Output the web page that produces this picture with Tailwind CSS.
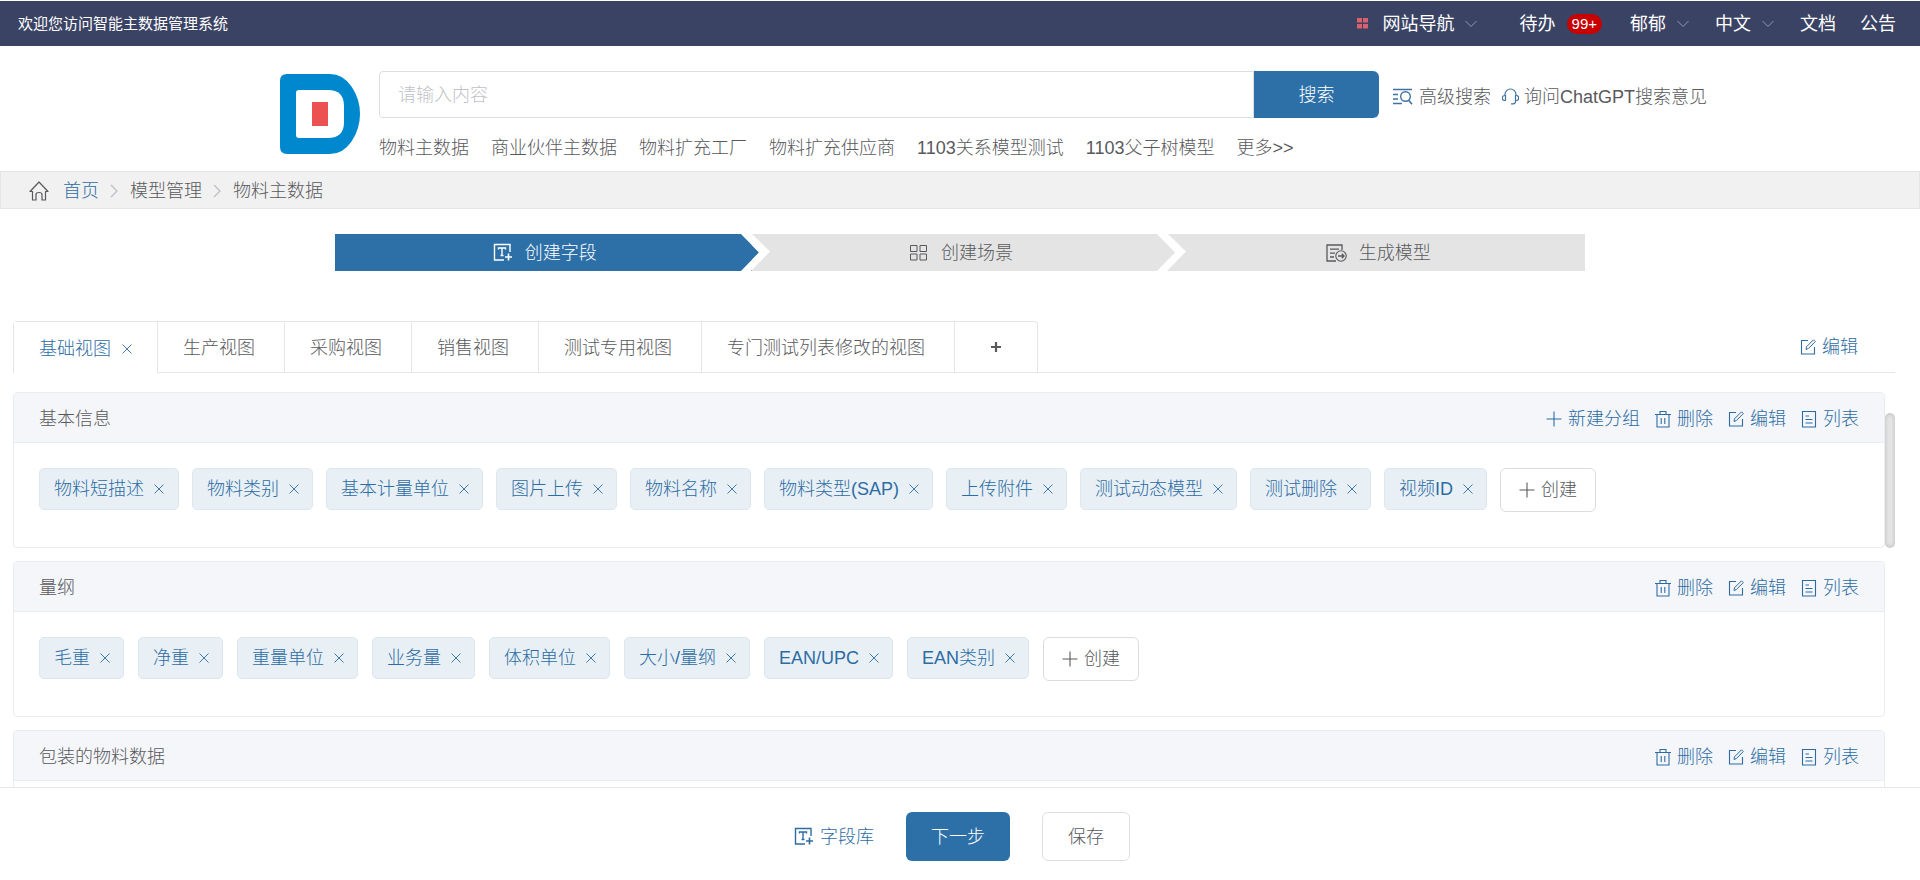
<!DOCTYPE html>
<html lang="zh-CN">
<head>
<meta charset="utf-8">
<meta name="viewport" content="width=device-width, initial-scale=1">
<title>智能主数据管理系统</title>
<script src="https://cdn.jsdelivr.net/npm/@tailwindcss/browser@4"></script>
</head>
<body class="flex h-screen flex-col overflow-hidden bg-white font-['Liberation_Sans','Noto_Sans_CJK_SC',sans-serif] text-lg/6 font-light text-[#58595c]">

<svg class="hidden" aria-hidden="true">
  <symbol id="i-down" viewBox="0 0 12 12"><path d="M.5 3 6 8.500 11.500 3" fill="none" stroke="currentColor"/></symbol>
  <symbol id="i-right" viewBox="0 0 8 14"><path d="M1 1l6 6-6 6" fill="none" stroke="currentColor" stroke-width="1.200"/></symbol>
  <symbol id="i-x" viewBox="0 0 10 10"><path d="M.5.5l9 9M9.500.5l-9 9" fill="none" stroke="currentColor" stroke-width=".9"/></symbol>
  <symbol id="i-plus" viewBox="0 0 16 16"><path d="M8 .5v15M.5 8h15" fill="none" stroke="currentColor" stroke-width="1.100"/></symbol>
  <symbol id="i-trash" viewBox="0 0 18 18"><path d="M1 4.500h16M6 4.500v-3h6v3M3 4.500V17h12V4.500M7.200 8v6M10.800 8v6" fill="none" stroke="currentColor" stroke-width="1.100"/></symbol>
  <symbol id="i-edit" viewBox="0 0 18 18"><path d="M9 2.500H2.500v13.500H15.500V9" fill="none" stroke="currentColor" stroke-width="1.100"/><path d="M7 11.500l.5-2.700 7-7 1.800 1.800-7 7z" fill="none" stroke="currentColor" stroke-width="1"/></symbol>
  <symbol id="i-list" viewBox="0 0 18 18"><path d="M2.500 1.500h13v15.500h-13zM5.500 6H9M5.500 9.500h7M5.500 13h7" fill="none" stroke="currentColor" stroke-width="1.100"/></symbol>
  <symbol id="i-field" viewBox="0 0 19 19"><path d="M17 9V1.500H1.500v15.500H11" fill="none" stroke="currentColor" stroke-width="1.400"/><path d="M5.500 6.500V5h7v1.500M9 5v7.500M7.500 12.500h3" fill="none" stroke="currentColor" stroke-width="1.400"/><path d="M15.500 10.500v7M12 14h7" fill="none" stroke="currentColor" stroke-width="1.600"/></symbol>
</svg>

<header class="flex h-[46px] shrink-0 items-center border-t border-white bg-[#3b4365] pr-6 pl-[18px] font-normal text-white">
  <span class="text-[15px]">欢迎您访问智能主数据管理系统</span>
  <nav class="ml-auto flex items-center" aria-label="顶部导航">
    <button class="flex items-center">
      <svg class="mr-[15px] size-[11px] fill-[#dc5f6c]" viewBox="0 0 11 11"><path d="M0 0h5v4.500H0zM6 0h5v4.500H6zM0 6h5v4.500H0zM6 6h5v4.500H6z"/></svg>
      网站导航<svg class="ml-[10px] size-3 text-[#9499ad]"><use href="#i-down"/></svg>
    </button>
    <a href="#" class="ml-[43px] flex items-center">待办<span class="ml-[11px] flex h-5 items-center rounded-full bg-[#c80000] px-[5px] text-[15px]">99+</span></a>
    <button class="ml-7 flex items-center">郁郁<svg class="ml-[11px] size-3 text-[#9499ad]"><use href="#i-down"/></svg></button>
    <button class="ml-[26px] flex items-center">中文<svg class="ml-[11px] size-3 text-[#9499ad]"><use href="#i-down"/></svg></button>
    <a href="#" class="ml-[26px]">文档</a>
    <a href="#" class="ml-6">公告</a>
  </nav>
</header>

<section class="flex h-[125px] shrink-0 pl-[280px]">
  <svg class="mt-7 mr-[19px] size-20 shrink-0" viewBox="0 0 80 80" role="img" aria-label="标志">
    <path d="M7 0h43q13 0 21.500 12.500T80 40t-8.500 27.500T50 80H7q-7 0-7-7V7q0-7 7-7z" fill="#0088cf"/>
    <path d="M19 16h29q16 0 16 16v16q0 16-16 16H19q-3 0-3-3V19q0-3 3-3z" fill="#fff"/>
    <path d="M32 28h16v24H32z" fill="#ec5252"/>
  </svg>
  <div class="mt-[25px]">
    <div class="flex items-center">
      <form class="flex h-[47px] w-[1000px]">
        <input type="text" aria-label="搜索内容" placeholder="请输入内容" class="min-w-0 flex-1 rounded-l border border-[#dcdfe1] px-[18px] font-light placeholder:text-[#bfc2c8]">
        <button type="button" class="w-[125px] rounded-r-md bg-[#2d70a8] text-white">搜索</button>
      </form>
      <a href="#" class="ml-[14px] flex items-center pt-1">
        <svg class="mr-[6px] h-[17px] w-5 text-[#3f73a4]" viewBox="0 0 20 17" fill="none" stroke="currentColor" stroke-width="1.600"><path d="M0 1.500h19M0 6.500h5M0 11h5M0 15.500h9"/><circle cx="12.500" cy="8.500" r="4.800" stroke-width="1.400"/><path d="M15.500 12l3.500 4.200"/></svg>高级搜索
      </a>
      <a href="#" class="ml-[11px] flex items-center pt-1">
        <svg class="mr-[5px] size-[17px] text-[#3f73a4]" viewBox="0 0 17 17" fill="none" stroke="currentColor" stroke-width="1.200"><path d="M3 8V6.500a5.500 5.500 0 0 1 11 0V8M3.500 7.500H2.800a2.200 2.200 0 0 0 0 5h.7zM13.500 7.500h.7a2.200 2.200 0 0 1 0 5h-.7zM13.500 12.500v1.200Q13.500 15.500 11 15.800H9"/></svg>询问ChatGPT搜索意见
      </a>
    </div>
    <nav class="mt-[18px] flex gap-[22px]" aria-label="热门模型">
      <a href="#">物料主数据</a><a href="#">商业伙伴主数据</a><a href="#">物料扩充工厂</a><a href="#">物料扩充供应商</a><a href="#">1103关系模型测试</a><a href="#">1103父子树模型</a><a href="#">更多&gt;&gt;</a>
    </nav>
  </div>
</section>

<nav class="flex h-[38px] shrink-0 items-center border border-[#e4e5e6] bg-[#f1f1f1] pt-0.5 pl-7" aria-label="面包屑">
  <svg class="mr-[14px] size-5" viewBox="0 0 20 20" fill="none" stroke="currentColor" stroke-width="1.200" stroke-linejoin="round"><path d="M1 10.500 10 1l9 9.500h-2.500V19H13v-5.500q0-2-3-2t-3 2V19H3.500v-8.500z"/></svg>
  <a href="#" class="text-[#2d6ca3]">首页</a>
  <svg class="mr-3 ml-[11px] h-[14px] w-2 text-[#b9bec7]"><use href="#i-right"/></svg>
  <a href="#">模型管理</a>
  <svg class="mr-3 ml-[11px] h-[14px] w-2 text-[#b9bec7]"><use href="#i-right"/></svg>
  <span>物料主数据</span>
</nav>

<ol class="mx-auto mt-[25px] flex h-[37px] w-[1250px] shrink-0">
  <li class="relative flex flex-1 items-center justify-center gap-[13px] bg-[#2d70a8] pl-[3px] text-white">
    <svg class="size-[19px]"><use href="#i-field"/></svg>创建字段
    <svg class="absolute top-0 -right-[18px] z-10 h-[37px] w-[29px]" viewBox="0 0 29 37"><path d="M0 0l18 18.500L0 37z" fill="#2d70a8"/><path d="M0 0h11l18 17.500L10 37H0l18-18.500z" fill="#fff"/></svg>
  </li>
  <li class="relative flex flex-1 items-center justify-center gap-[14px] bg-[#e4e4e4] pl-[3px]">
    <svg class="size-[17px]" viewBox="0 0 17 17" fill="none" stroke="currentColor"><path d="M.5 1.500h6.500v6H.5zM10 1.500h6.500v6H10zM.5 10h6.500v6H.5zM10 10h6.500v6H10z"/></svg>创建场景
    <svg class="absolute top-0 -right-[18px] z-10 h-[37px] w-[29px]" viewBox="0 0 29 37"><path d="M0 0h11l18 17.500L10 37H0l18-18.500z" fill="#fff"/></svg>
  </li>
  <li class="flex flex-1 items-center justify-center gap-3 bg-[#e4e4e4] pl-[3px]">
    <svg class="h-[18px] w-[21px]" viewBox="0 0 21 18" fill="none" stroke="currentColor" stroke-width="1.300"><path d="M16 6V1H1v16h9M4 5.200h9M4 9.200h5M4 13h4"/><circle cx="15" cy="12" r="5.200" stroke-width="1.100"/><path d="M12 12h6M15.800 9.700 18 12l-2.200 2.300"/></svg>生成模型
  </li>
</ol>

<div class="mt-[50px] mr-[25px] ml-[13px] flex h-[52px] shrink-0 border-b border-[#e4e7ea]">
  <div class="-mb-px flex rounded-t border border-b-0 border-[#e4e7ea]" role="tablist">
    <div class="flex w-[143px] items-center bg-white pt-0.5 pl-[25px] text-[#2d6ca3]"><button role="tab" aria-selected="true">基础视图</button><button class="ml-[11px]" aria-label="关闭基础视图"><svg class="size-[10px]"><use href="#i-x"/></svg></button></div>
    <button role="tab" class="border-b border-l border-[#e4e7ea] pt-0.5 pr-[29px] pl-[25px]">生产视图</button>
    <button role="tab" class="border-b border-l border-[#e4e7ea] pt-0.5 pr-[29px] pl-[25px]">采购视图</button>
    <button role="tab" class="border-b border-l border-[#e4e7ea] pt-0.5 pr-[29px] pl-[25px]">销售视图</button>
    <button role="tab" class="border-b border-l border-[#e4e7ea] pt-0.5 pr-[29px] pl-[25px]">测试专用视图</button>
    <button role="tab" class="border-b border-l border-[#e4e7ea] pt-0.5 pr-[29px] pl-[25px]">专门测试列表修改的视图</button>
    <button class="flex w-[83px] items-center justify-center border-b border-l border-[#e4e7ea]" aria-label="新增视图"><svg class="size-[10px]" viewBox="0 0 10 10"><path d="M5 0v10M0 5h10" stroke="currentColor" stroke-width="2.200"/></svg></button>
  </div>
  <button class="mr-[37px] ml-auto flex items-center gap-[5px] text-[#2d6ca3]"><svg class="size-[18px]"><use href="#i-edit"/></svg>编辑</button>
</div>

<main class="relative min-h-0 flex-1 overflow-hidden pt-[19px] pr-[35px] pl-[13px]">
  <div class="absolute top-10 right-[25px] h-[135px] w-[10px] rounded-full bg-[#e6e6e6] shadow-[inset_0_0_5px_rgba(0,0,0,0.2)]"></div>

  <section class="mb-[13px] h-[156px] overflow-hidden rounded border border-[#e9ecf1]">
    <div class="flex h-[50px] items-center justify-between border-b border-[#e9ecf1] bg-[#f4f6fa] px-[25px] pt-0.5">
      <h2>基本信息</h2>
      <div class="flex gap-[14px] text-[#2d6ca3]">
        <button class="flex items-center gap-[6px]"><svg class="size-4"><use href="#i-plus"/></svg>新建分组</button>
        <button class="flex items-center gap-[5px]"><svg class="size-[18px]"><use href="#i-trash"/></svg>删除</button>
        <button class="flex items-center gap-[5px]"><svg class="size-[18px]"><use href="#i-edit"/></svg>编辑</button>
        <button class="flex items-center gap-[5px]"><svg class="size-[18px]"><use href="#i-list"/></svg>列表</button>
      </div>
    </div>
    <div class="flex items-start gap-[13px] px-[25px] pt-[25px] text-[#2d6ca3]">
      <span class="flex h-[42px] items-center gap-[10px] rounded-[5px] border border-[#dbe6ee] bg-[#e8f0f6] px-[14px]">物料短描述<button aria-label="移除物料短描述"><svg class="size-[10px]"><use href="#i-x"/></svg></button></span>
      <span class="flex h-[42px] items-center gap-[10px] rounded-[5px] border border-[#dbe6ee] bg-[#e8f0f6] pr-[13px] pl-[14px]">物料类别<button aria-label="移除物料类别"><svg class="size-[10px]"><use href="#i-x"/></svg></button></span>
      <span class="flex h-[42px] items-center gap-[10px] rounded-[5px] border border-[#dbe6ee] bg-[#e8f0f6] pr-[13px] pl-[14px]">基本计量单位<button aria-label="移除基本计量单位"><svg class="size-[10px]"><use href="#i-x"/></svg></button></span>
      <span class="flex h-[42px] items-center gap-[10px] rounded-[5px] border border-[#dbe6ee] bg-[#e8f0f6] pr-[13px] pl-[14px]">图片上传<button aria-label="移除图片上传"><svg class="size-[10px]"><use href="#i-x"/></svg></button></span>
      <span class="flex h-[42px] items-center gap-[10px] rounded-[5px] border border-[#dbe6ee] bg-[#e8f0f6] pr-[13px] pl-[14px]">物料名称<button aria-label="移除物料名称"><svg class="size-[10px]"><use href="#i-x"/></svg></button></span>
      <span class="flex h-[42px] items-center gap-[10px] rounded-[5px] border border-[#dbe6ee] bg-[#e8f0f6] pr-[13px] pl-[14px]">物料类型(SAP)<button aria-label="移除物料类型(SAP)"><svg class="size-[10px]"><use href="#i-x"/></svg></button></span>
      <span class="flex h-[42px] items-center gap-[10px] rounded-[5px] border border-[#dbe6ee] bg-[#e8f0f6] pr-[13px] pl-[14px]">上传附件<button aria-label="移除上传附件"><svg class="size-[10px]"><use href="#i-x"/></svg></button></span>
      <span class="flex h-[42px] items-center gap-[10px] rounded-[5px] border border-[#dbe6ee] bg-[#e8f0f6] pr-[13px] pl-[14px]">测试动态模型<button aria-label="移除测试动态模型"><svg class="size-[10px]"><use href="#i-x"/></svg></button></span>
      <span class="flex h-[42px] items-center gap-[10px] rounded-[5px] border border-[#dbe6ee] bg-[#e8f0f6] pr-[13px] pl-[14px]">测试删除<button aria-label="移除测试删除"><svg class="size-[10px]"><use href="#i-x"/></svg></button></span>
      <span class="flex h-[42px] items-center gap-[10px] rounded-[5px] border border-[#dbe6ee] bg-[#e8f0f6] pr-[13px] pl-[14px]">视频ID<button aria-label="移除视频ID"><svg class="size-[10px]"><use href="#i-x"/></svg></button></span>
      <button class="flex h-11 items-center gap-[6px] rounded-md border border-[#dcdcdc] px-[18px] text-[#58595c]"><svg class="size-4"><use href="#i-plus"/></svg>创建</button>
    </div>
  </section>

  <section class="mb-[13px] h-[156px] overflow-hidden rounded border border-[#e9ecf1]">
    <div class="flex h-[50px] items-center justify-between border-b border-[#e9ecf1] bg-[#f4f6fa] px-[25px] pt-0.5">
      <h2>量纲</h2>
      <div class="flex gap-[14px] text-[#2d6ca3]">
        <button class="flex items-center gap-[5px]"><svg class="size-[18px]"><use href="#i-trash"/></svg>删除</button>
        <button class="flex items-center gap-[5px]"><svg class="size-[18px]"><use href="#i-edit"/></svg>编辑</button>
        <button class="flex items-center gap-[5px]"><svg class="size-[18px]"><use href="#i-list"/></svg>列表</button>
      </div>
    </div>
    <div class="flex items-start gap-[14px] px-[25px] pt-[25px] text-[#2d6ca3]">
      <span class="flex h-[42px] items-center gap-[10px] rounded-[5px] border border-[#dbe6ee] bg-[#e8f0f6] pr-[13px] pl-[14px]">毛重<button aria-label="移除毛重"><svg class="size-[10px]"><use href="#i-x"/></svg></button></span>
      <span class="flex h-[42px] items-center gap-[10px] rounded-[5px] border border-[#dbe6ee] bg-[#e8f0f6] pr-[13px] pl-[14px]">净重<button aria-label="移除净重"><svg class="size-[10px]"><use href="#i-x"/></svg></button></span>
      <span class="flex h-[42px] items-center gap-[10px] rounded-[5px] border border-[#dbe6ee] bg-[#e8f0f6] pr-[13px] pl-[14px]">重量单位<button aria-label="移除重量单位"><svg class="size-[10px]"><use href="#i-x"/></svg></button></span>
      <span class="flex h-[42px] items-center gap-[10px] rounded-[5px] border border-[#dbe6ee] bg-[#e8f0f6] pr-[13px] pl-[14px]">业务量<button aria-label="移除业务量"><svg class="size-[10px]"><use href="#i-x"/></svg></button></span>
      <span class="flex h-[42px] items-center gap-[10px] rounded-[5px] border border-[#dbe6ee] bg-[#e8f0f6] pr-[13px] pl-[14px]">体积单位<button aria-label="移除体积单位"><svg class="size-[10px]"><use href="#i-x"/></svg></button></span>
      <span class="flex h-[42px] items-center gap-[10px] rounded-[5px] border border-[#dbe6ee] bg-[#e8f0f6] pr-[13px] pl-[14px]">大小/量纲<button aria-label="移除大小/量纲"><svg class="size-[10px]"><use href="#i-x"/></svg></button></span>
      <span class="flex h-[42px] items-center gap-[10px] rounded-[5px] border border-[#dbe6ee] bg-[#e8f0f6] pr-[13px] pl-[14px]">EAN/UPC<button aria-label="移除EAN/UPC"><svg class="size-[10px]"><use href="#i-x"/></svg></button></span>
      <span class="flex h-[42px] items-center gap-[10px] rounded-[5px] border border-[#dbe6ee] bg-[#e8f0f6] pr-[13px] pl-[14px]">EAN类别<button aria-label="移除EAN类别"><svg class="size-[10px]"><use href="#i-x"/></svg></button></span>
      <button class="flex h-11 items-center gap-[6px] rounded-md border border-[#dcdcdc] px-[18px] text-[#58595c]"><svg class="size-4"><use href="#i-plus"/></svg>创建</button>
    </div>
  </section>

  <section class="h-[156px] overflow-hidden rounded border border-[#e9ecf1]">
    <div class="flex h-[50px] items-center justify-between border-b border-[#e9ecf1] bg-[#f4f6fa] px-[25px] pt-0.5">
      <h2>包装的物料数据</h2>
      <div class="flex gap-[14px] text-[#2d6ca3]">
        <button class="flex items-center gap-[5px]"><svg class="size-[18px]"><use href="#i-trash"/></svg>删除</button>
        <button class="flex items-center gap-[5px]"><svg class="size-[18px]"><use href="#i-edit"/></svg>编辑</button>
        <button class="flex items-center gap-[5px]"><svg class="size-[18px]"><use href="#i-list"/></svg>列表</button>
      </div>
    </div>
  </section>
</main>

<footer class="flex h-[93px] shrink-0 items-start justify-center gap-8 border-t border-[#e4e7ea] bg-white pt-6 pl-1">
  <button class="flex h-[49px] items-center gap-[7px] text-[#2d6ca3]"><svg class="size-[19px]"><use href="#i-field"/></svg>字段库</button>
  <button class="h-[49px] rounded-md bg-[#2d70a8] px-[25px] text-white">下一步</button>
  <button class="h-[49px] rounded-md border border-[#dcdfe1] px-[25px]">保存</button>
</footer>
</body>
</html>
